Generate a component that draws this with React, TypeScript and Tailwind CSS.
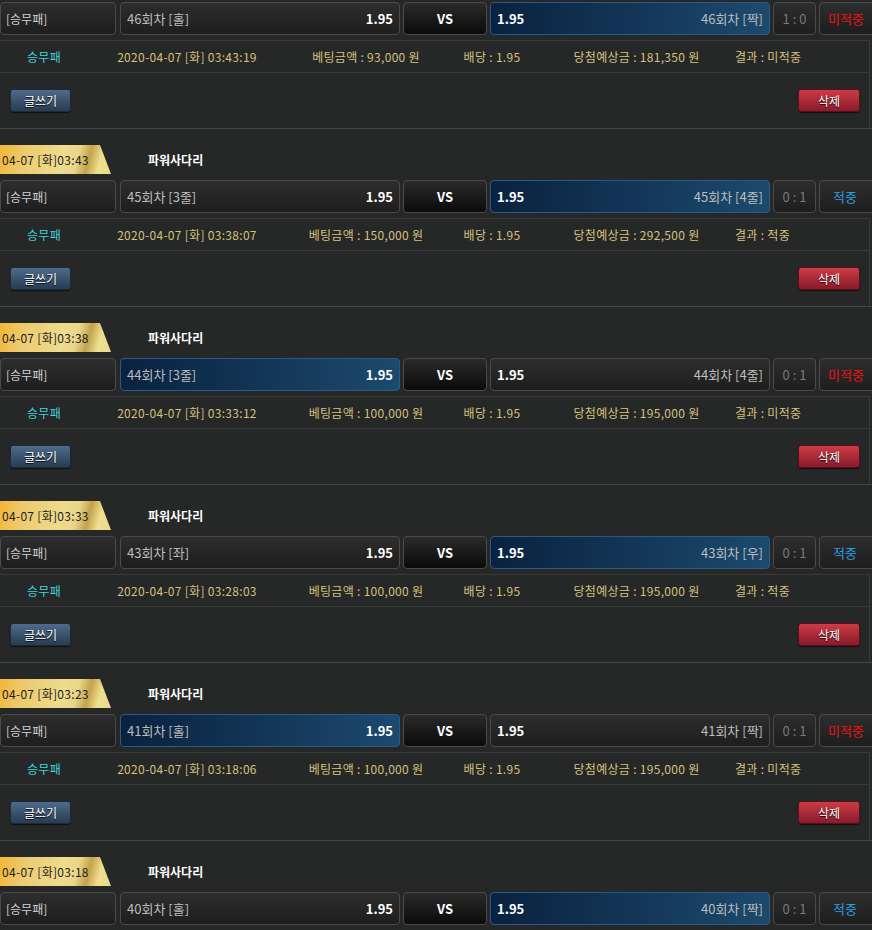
import React from "react";

type Block = {
  tag: string;
  round: number;
  home: string;
  away: string;
  sel: "home" | "away";
  score: string;
  hit: boolean;
  date: string;
  bet: string;
  win: string;
};

const blocks: Block[] = [
  { tag: "04-07 [화]03:48", round: 46, home: "[홀]", away: "[짝]", sel: "away", score: "1 : 0", hit: false, date: "2020-04-07 [화] 03:43:19", bet: "93,000", win: "181,350" },
  { tag: "04-07 [화]03:43", round: 45, home: "[3줄]", away: "[4줄]", sel: "away", score: "0 : 1", hit: true, date: "2020-04-07 [화] 03:38:07", bet: "150,000", win: "292,500" },
  { tag: "04-07 [화]03:38", round: 44, home: "[3줄]", away: "[4줄]", sel: "home", score: "0 : 1", hit: false, date: "2020-04-07 [화] 03:33:12", bet: "100,000", win: "195,000" },
  { tag: "04-07 [화]03:33", round: 43, home: "[좌]", away: "[우]", sel: "away", score: "0 : 1", hit: true, date: "2020-04-07 [화] 03:28:03", bet: "100,000", win: "195,000" },
  { tag: "04-07 [화]03:23", round: 41, home: "[홀]", away: "[짝]", sel: "home", score: "0 : 1", hit: false, date: "2020-04-07 [화] 03:18:06", bet: "100,000", win: "195,000" },
  { tag: "04-07 [화]03:18", round: 40, home: "[홀]", away: "[짝]", sel: "away", score: "0 : 1", hit: true, date: "2020-04-07 [화] 03:13:04", bet: "100,000", win: "195,000" },
];

const boxBase = "h-[33px] shrink-0 rounded-[4px] border flex items-center";
const boxDark = "border-[#4a4a4a] bg-gradient-to-b from-[#2d2d2d] to-[#1e1e1e]";
const boxSel = "border-[#2a5a8c] bg-gradient-to-r from-[#0a2240] to-[#1c4a6d]";

function BlockView({ b, first, last }: { b: Block; first: boolean; last: boolean }) {
  const homeSel = b.sel === "home";
  const awaySel = b.sel === "away";
  return (
    <div className={first ? "pt-[2px]" : "border-t border-[#474747]"}>
      {!first && (
        <div className="pt-[16px] flex items-center h-[45px]">
          <div className="h-[29px] w-[111px] flex items-center pl-[2px] text-[12px] tracking-[0.3px] text-[#1e1e1e] [clip-path:polygon(0_0,100px_0,111px_100%,0_100%)] bg-[linear-gradient(105deg,#f3b535_0%,#eccb6f_22%,#eedb8c_55%,#e9d688_68%,#c4a24c_78%,#eee08f_88%,#e9da8a_100%)]">
            {b.tag}
          </div>
          <div className="ml-[37px] text-[12px] font-bold text-white">파워사다리</div>
        </div>
      )}
      <div className={`${first ? "" : "mt-[6px]"} flex h-[33px] overflow-hidden`}>
        <div className={`${boxBase} ${boxDark} w-[116px] pl-[5px] text-[12px] text-[#cfcfcf]`}>[승무패]</div>
        <div className={`${boxBase} ${homeSel ? boxSel : boxDark} ml-[4px] w-[280px] px-[6px] justify-between`}>
          <span className="text-[13px] text-[#bdbdbd]">{b.round}회차 {b.home}</span>
          <span className="text-[13px] font-bold text-white">1.95</span>
        </div>
        <div className={`${boxBase} ml-[3px] w-[84px] justify-center border-[#4a4a4a] bg-gradient-to-b from-[#2b2b2b] to-[#0b0b0b] text-[13px] font-bold text-white`}>VS</div>
        <div className={`${boxBase} ${awaySel ? boxSel : boxDark} ml-[3px] w-[280px] px-[6px] justify-between`}>
          <span className="text-[13px] font-bold text-white">1.95</span>
          <span className="text-[13px] text-[#bdbdbd]">{b.round}회차 {b.away}</span>
        </div>
        <div className={`${boxBase} ${boxDark} ml-[3px] w-[43px] justify-center text-[13px] text-[#7a7a7a]`}>{b.score}</div>
        <div className={`${boxBase} ${boxDark} ml-[3px] w-[58px] text-[13px] ${b.hit ? "text-[#2c9ee0] pl-[13px]" : "text-[#ee1111] pl-[8px]"}`}>
          {b.hit ? "적중" : "미적중"}
        </div>
      </div>
      {!last && (
        <div className="mt-[5px] w-[870px] border-r border-[#3a3a3a]">
          <div className="h-[33px] border-y border-[#3a3a3a] flex items-center text-[12px] tracking-[0.3px] text-[#d3c27d]">
            <div className="w-[88px] text-center text-[#3ed4dc]">승무패</div>
            <div className="w-[198px] text-center">{b.date}</div>
            <div className="w-[160px] text-center">베팅금액 : {b.bet} 원</div>
            <div className="w-[92px] text-center">배당 : 1.95</div>
            <div className="w-[197px] text-center">당첨예상금 : {b.win} 원</div>
            <div>결과 : {b.hit ? "적중" : "미적중"}</div>
          </div>
          <div className="h-[55px] flex items-center justify-between pl-[10px] pr-[9px]">
            <button className="w-[61px] h-[23px] rounded-[3px] border border-[#1c2a3a] bg-gradient-to-b from-[#4f6b8a] to-[#283c53] text-[12px] text-white [text-shadow:0_1px_1px_#000] shadow-[0_1px_1px_rgba(0,0,0,0.6)]">
              글쓰기
            </button>
            <button className="w-[62px] h-[23px] rounded-[3px] border border-[#5a1018] bg-gradient-to-b from-[#cc3c45] to-[#8a1a2b] text-[12px] text-white [text-shadow:0_1px_1px_#000] shadow-[0_1px_1px_rgba(0,0,0,0.6)]">
              삭제
            </button>
          </div>
        </div>
      )}
    </div>
  );
}

export default function App() {
  return (
    <div className="min-h-[930px] w-[872px] overflow-hidden bg-[#262727] [font-family:'Noto_Sans_CJK_KR','Noto_Sans',sans-serif] leading-none">
      {blocks.map((b, i) => (
        <BlockView key={i} b={b} first={i === 0} last={i === blocks.length - 1} />
      ))}
    </div>
  );
}
